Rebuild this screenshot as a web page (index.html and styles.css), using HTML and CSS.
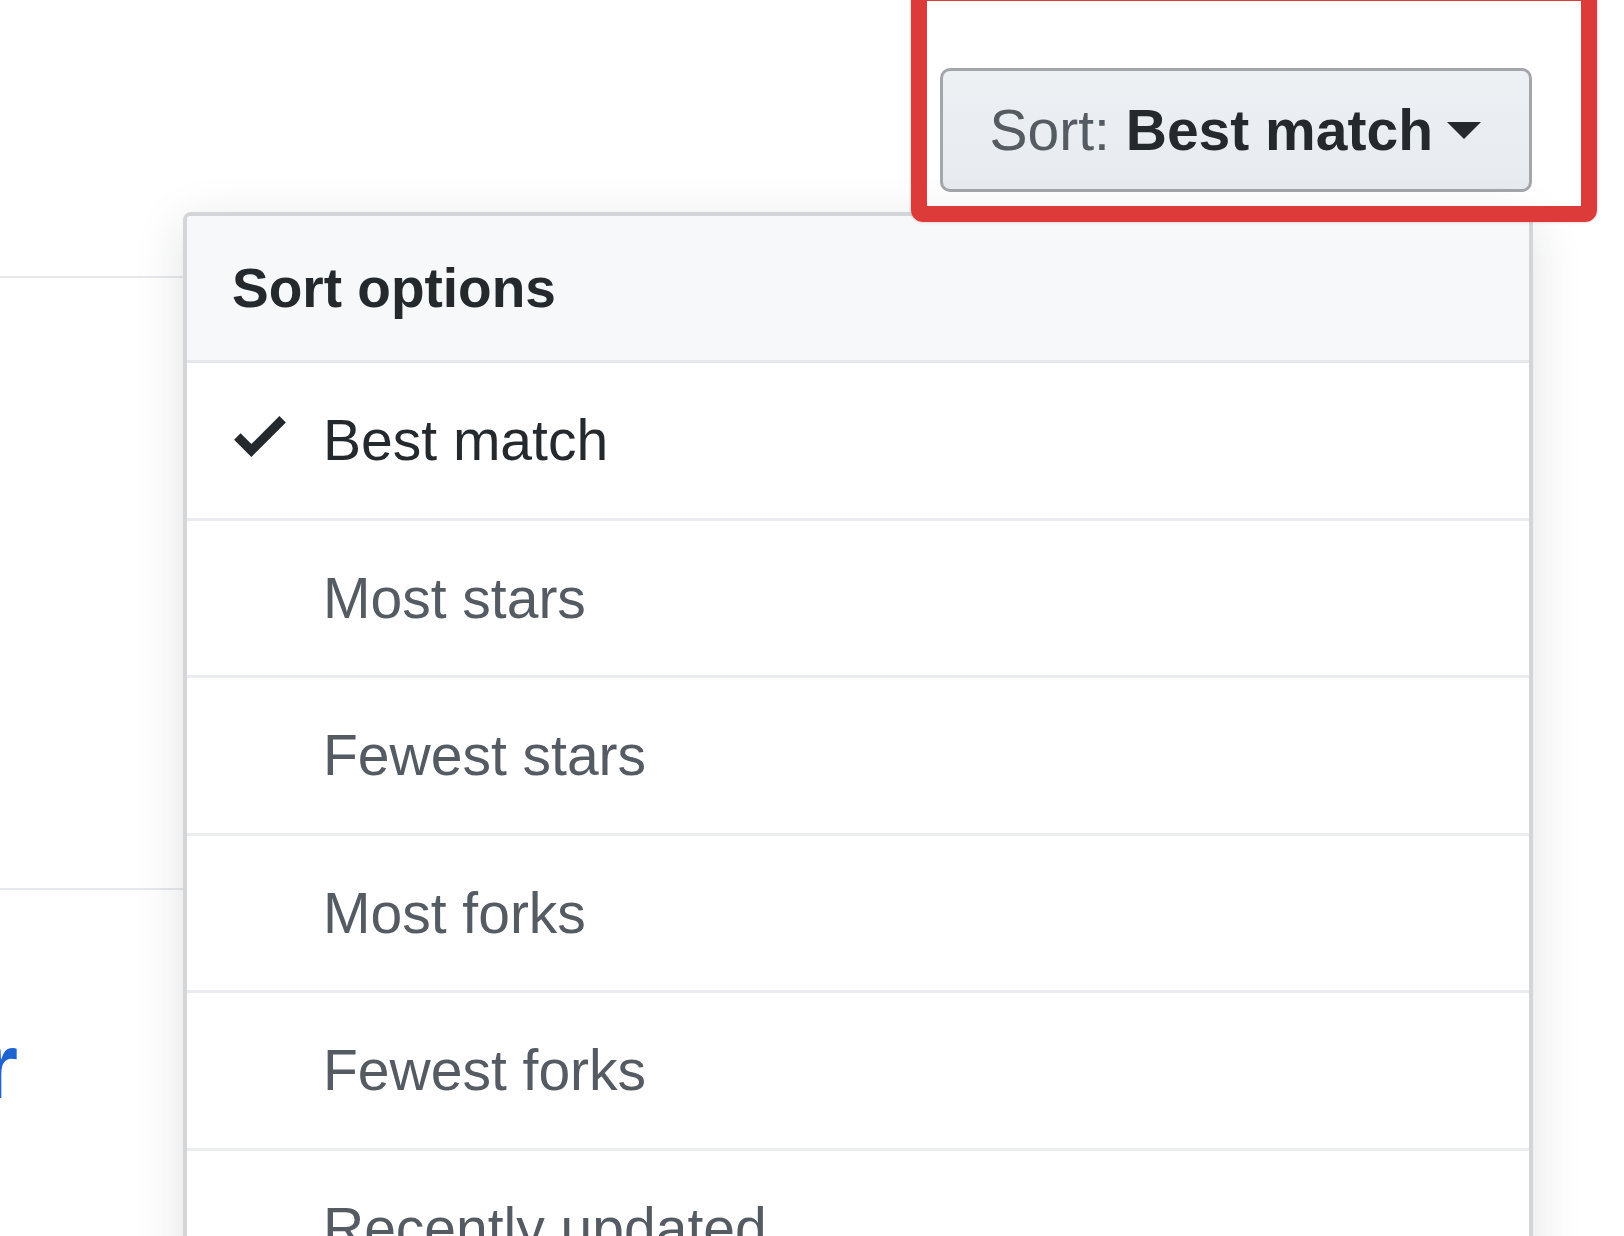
FILE: index.html
```html
<!DOCTYPE html>
<html lang="en">
<head>
<meta charset="utf-8">
<title>Sort options</title>
<link rel="stylesheet" href="styles.css">
</head>
<body>
<div class="page">
  <div class="sortbar">
    <button class="sort-btn" type="button">
      <span class="sort-label">Sort:</span>&nbsp;<span class="sort-value">Best match</span>
      <span class="caret"></span>
    </button>
  </div>

  <div class="results">
    <div class="result result-first"></div>
    <div class="result">
      <div class="repo-clip"><a class="repo-link" href="#">docker</a></div>
    </div>
  </div>

  <div class="menu">
    <div class="menu-header">Sort options</div>
    <div class="menu-item selected">
      <span class="check-slot">
        <svg class="check" viewBox="0 3.5 12 9.5" width="52" height="41"><path d="M12 5l-8 8-4-4 1.5-1.5L4 10l6.5-6.5L12 5z"/></svg>
      </span>
      <span class="item-text">Best match</span>
    </div>
    <div class="menu-item"><span class="check-slot"></span><span class="item-text">Most stars</span></div>
    <div class="menu-item"><span class="check-slot"></span><span class="item-text">Fewest stars</span></div>
    <div class="menu-item"><span class="check-slot"></span><span class="item-text">Most forks</span></div>
    <div class="menu-item"><span class="check-slot"></span><span class="item-text">Fewest forks</span></div>
    <div class="menu-item"><span class="check-slot"></span><span class="item-text">Recently updated</span></div>
  </div>

  <div class="highlight"></div>
</div>
</body>
</html>
```

FILE: styles.css
```css
html, body {
  margin: 0;
  padding: 0;
  background: #ffffff;
}

.page {
  position: relative;
  width: 1624px;
  height: 1236px;
  overflow: hidden;
  background: #ffffff;
  font-family: "Liberation Sans", Arial, sans-serif;
  color: #24292e;
}

/* ---- sort button bar ---- */
.sortbar {
  display: flex;
  justify-content: flex-end;
  padding-top: 68px;
  padding-right: 92px;
}

.sort-btn {
  display: flex;
  align-items: center;
  height: 124px;
  box-sizing: border-box;
  padding: 0 48px 0 47px;
  border: 3px solid #a3a7ac;
  border-radius: 10px;
  background: linear-gradient(180deg, #eef1f4 0%, #e7eaee 100%);
  font-family: "Liberation Sans", Arial, sans-serif;
  font-size: 57px;
  line-height: 1;
  color: #24292e;
  white-space: pre;
}

.sort-label {
  color: #555b62;
}

.sort-value {
  font-weight: 700;
  color: #24292e;
}

.caret {
  display: inline-block;
  margin-left: 14px;
  width: 0;
  height: 0;
  border-style: solid;
  border-width: 17px 17px 0 17px;
  border-color: #24292e transparent transparent transparent;
}

/* ---- results list behind the menu ---- */
.results {
  width: 1530px;
  margin-top: 84px;
}

.result {
  border-top: 2px solid #e6e8eb;
}

.result-first {
  height: 610px;
}

.repo-clip {
  display: flex;
  justify-content: flex-end;
  width: 18px;
  overflow: hidden;
  padding-top: 120px;
}

.repo-link {
  flex: none;
  font-size: 92px;
  line-height: 112px;
  font-weight: 700;
  color: #1f63d2;
  text-decoration: none;
}

/* ---- dropdown menu ---- */
.menu {
  position: absolute;
  left: 183px;
  top: 212px;
  width: 1350px;
  box-sizing: border-box;
  border: 4px solid #d3d5d8;
  border-radius: 8px;
  background: #ffffff;
  box-shadow: 0 12px 50px rgba(27, 31, 35, 0.13);
}

.menu-header {
  padding: 39px 45px;
  background: #f6f8fa;
  border-bottom: 3px solid #e6e8eb;
  font-size: 55px;
  line-height: 66px;
  font-weight: 700;
  color: #24292e;
  border-radius: 4px 4px 0 0;
}

.menu-item {
  display: flex;
  align-items: flex-start;
  padding: 43px 47px 43.6px;
  border-bottom: 3px solid #eaecef;
  font-size: 57px;
  line-height: 68px;
  color: #555b62;
}

.menu-item.selected {
  color: #24292e;
}

.check-slot {
  flex: none;
  width: 52px;
  margin-right: 37px;
  height: 68px;
}

.check {
  display: block;
  margin-top: 10px;
  fill: #24292e;
}

.item-text {
  white-space: nowrap;
}

/* ---- red annotation frame ---- */
.highlight {
  position: absolute;
  left: 911px;
  top: -15px;
  width: 686px;
  height: 237px;
  box-sizing: border-box;
  border: 16px solid #dd3a3a;
  border-radius: 12px;
  box-shadow: 0 0 3px rgba(221, 58, 58, 0.35);
}
```
